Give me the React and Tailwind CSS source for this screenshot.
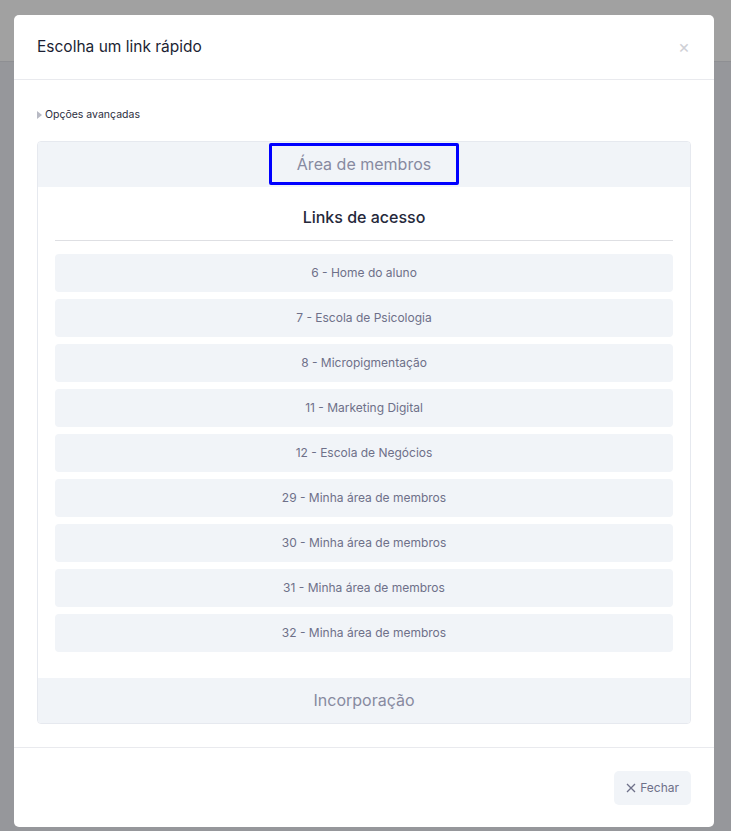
const links = [
  "6 - Home do aluno",
  "7 - Escola de Psicologia",
  "8 - Micropigmentação",
  "11 - Marketing Digital",
  "12 - Escola de Negócios",
  "29 - Minha área de membros",
  "30 - Minha área de membros",
  "31 - Minha área de membros",
  "32 - Minha área de membros",
];

export default function App() {
  return (
    <div
      className="relative h-[831px] w-full overflow-hidden bg-[#96979b]"
      style={{ fontFamily: "Inter, 'Noto Sans', sans-serif" }}
    >
      <div className="h-[62px] border-b border-[#8e8f93] bg-[#a1a1a1]" />

      <div className="absolute left-[14px] top-[15px] flex h-[812px] w-[700px] flex-col rounded-[5px] bg-white">
        {/* header */}
        <div className="flex h-[65px] items-center justify-between border-b border-[#e9eaee] pl-[23px] pr-[24px]">
          <h2 className="text-[15.5px] tracking-[0px] text-[#1c1f33]">
            Escolha um link rápido
          </h2>
          <span className="text-[18px] leading-none text-[#cfd0d6]">×</span>
        </div>

        {/* body */}
        <div className="flex-1 px-[23px] pt-[27px]">
          <div className="flex items-center gap-[3px] text-[10.5px] text-[#2b2e40]">
            <svg width="5" height="8" viewBox="0 0 5 8">
              <path d="M0 0 L5 4 L0 8 Z" fill="#b8bac4" />
            </svg>
            <span>Opções avançadas</span>
          </div>

          <div className="mt-[18px] overflow-hidden rounded-[4px] border border-[#e6e9ef]">
            <div className="flex h-[45px] items-center justify-center bg-[#f1f4f8]">
              <span className="rounded-[2px] border-[3px] border-[#0000ff] px-[25px] py-[7px] text-[16px] leading-[22px] text-[#878aa0]">
                Área de membros
              </span>
            </div>

            <div className="px-[17px] pb-[26px] pt-[18px]">
              <h3 className="pb-[11px] text-center text-[16px] font-medium text-[#25283a]">
                Links de acesso
              </h3>
              <div className="border-t border-[#dedfe3]" />
              <div className="mt-[13px] flex flex-col gap-[7px]">
                {links.map((l) => (
                  <div
                    key={l}
                    className="flex h-[38px] items-center justify-center rounded-[4px] bg-[#f1f4f8] text-[12px] text-[#6e7089]"
                  >
                    {l}
                  </div>
                ))}
              </div>
            </div>

            <div className="flex h-[45px] items-center justify-center bg-[#f1f4f8] text-[16px] text-[#878aa0]">
              Incorporação
            </div>
          </div>
        </div>

        {/* footer */}
        <div className="flex h-[80px] items-center justify-end border-t border-[#e9eaee] pr-[23px]">
          <button className="flex h-[34px] items-center gap-[4px] rounded-[5px] bg-[#f1f4f8] px-[12px] text-[12px] text-[#6e7089]">
            <svg width="10" height="10" viewBox="0 0 10 10">
              <path d="M1 1 L9 9 M9 1 L1 9" stroke="#6e7089" strokeWidth="1.3" />
            </svg>
            Fechar
          </button>
        </div>
      </div>
    </div>
  );
}
